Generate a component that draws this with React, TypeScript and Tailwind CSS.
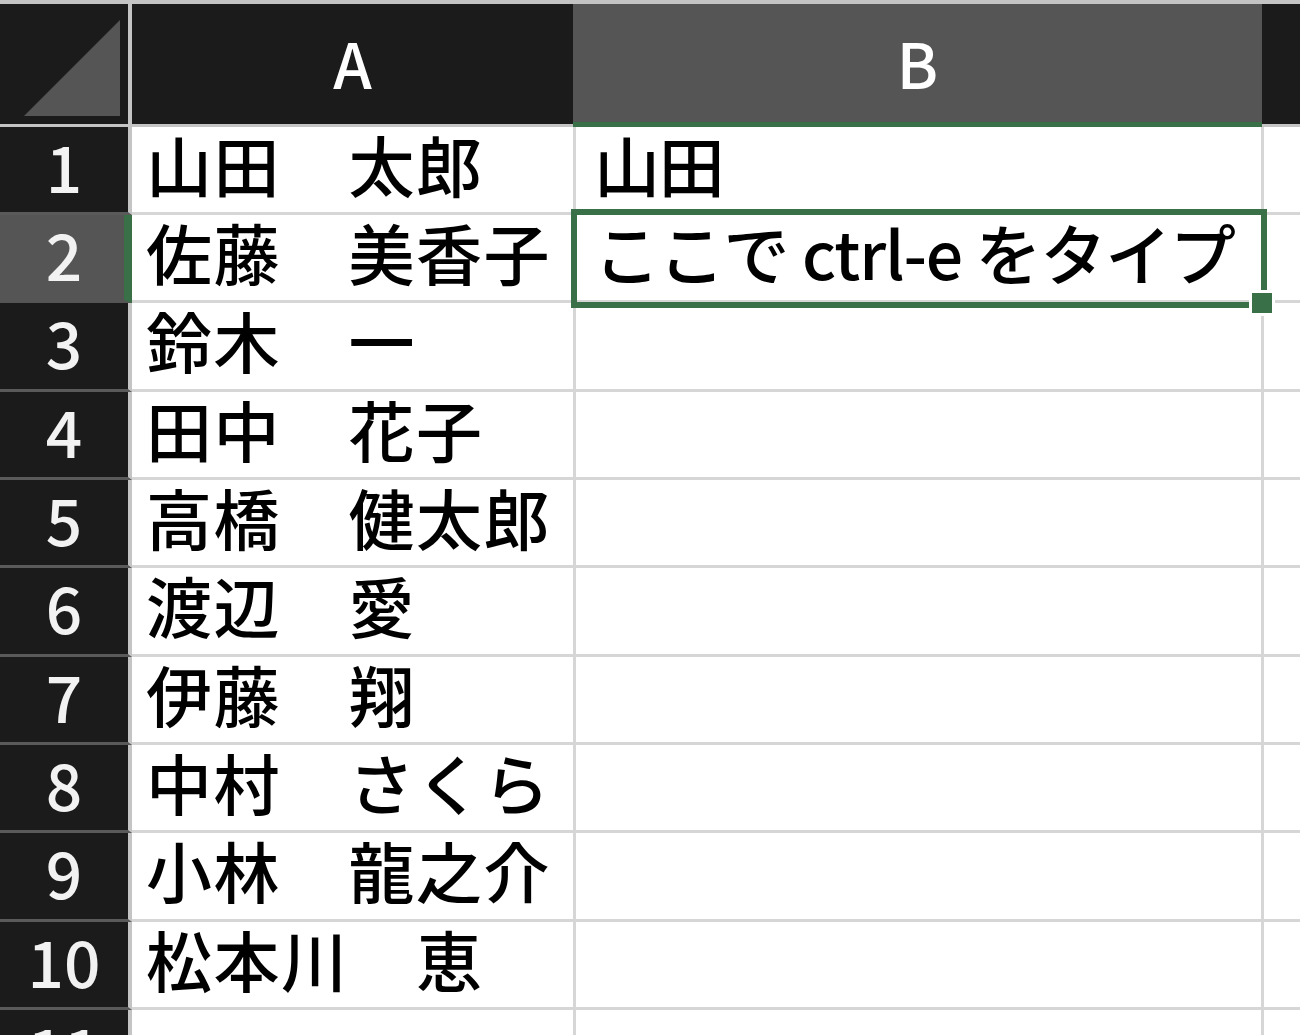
import React from "react";

const rows: [string, string][] = [
  ["山田　太郎", "山田"],
  ["佐藤　美香子", "ここで ctrl-e をタイプ"],
  ["鈴木　一", ""],
  ["田中　花子", ""],
  ["高橋　健太郎", ""],
  ["渡辺　愛", ""],
  ["伊藤　翔", ""],
  ["中村　さくら", ""],
  ["小林　龍之介", ""],
  ["松本川　恵", ""],
  ["", ""],
];

const font = { fontFamily: '"Noto Sans CJK JP", "Noto Sans", sans-serif' };

export default function App() {
  return (
    <div
      className="relative w-[1300px] h-[1035px] overflow-hidden bg-white font-medium"
      style={font}
    >
      <div className="h-[4px] bg-[#c4c4c4]" />
      {/* header row */}
      <div className="flex">
        <div className="w-[128px] h-[123px] bg-[#1b1b1b] border-b-[3px] border-[#c4c4c4] shrink-0 flex items-end justify-end pr-[8px] pb-[8px]">
          <svg width="96" height="96" viewBox="0 0 96 96">
            <polygon points="0,96 96,0 96,96" fill="#555555" />
          </svg>
        </div>
        <div className="w-[4px] h-[123px] bg-[#c4c4c4] shrink-0" />
        <div className="w-[441px] h-[123px] bg-[#1b1b1b] border-b-[3px] border-[#c4c4c4] shrink-0 flex items-center justify-center pb-[4px] text-white text-[62px] leading-none">
          A
        </div>
        <div className="w-[689px] h-[123px] bg-[#555555] border-b-[5px] border-[#3a7047] shrink-0 flex items-center justify-center pb-[2px] text-white text-[62px] leading-none">
          B
        </div>
        <div className="flex-1 h-[123px] bg-[#1b1b1b] border-b-[3px] border-[#c4c4c4]" />
      </div>
      {/* data rows */}
      {rows.map(([a, b], i) => {
        const sel = i === 1;
        const tall = i === 2 || i === 5 || i === 8;
        return (
          <div key={i} className={tall ? "flex h-[89px]" : "flex h-[88px]"}>
            {sel ? (
              <div className="w-[132px] border-r-[8px] border-[#3a7047] bg-[#555555] shrink-0 flex items-center justify-center pb-[10px] pl-[4px] text-[#f2f2f2] text-[64px] leading-none border-b-[3px] border-b-[#555555]">
                {i + 1}
              </div>
            ) : (
              <div className="w-[132px] border-r-[4px] border-r-[#c4c4c4] bg-[#1b1b1b] shrink-0 flex items-center justify-center pb-[10px] text-[#f2f2f2] text-[64px] leading-none border-b-[3px] border-b-[#5a5a5a]">
                {i + 1}
              </div>
            )}
            <div className="w-[444px] border-r-[3px] border-b-[3px] border-[#d6d6d6] shrink-0 flex items-center pl-[14px] pb-[14px] text-black text-[66px] leading-none whitespace-nowrap tracking-[1.5px]">
              {a}
            </div>
            <div className="w-[688px] border-r-[3px] border-b-[3px] border-[#d6d6d6] shrink-0 flex items-center pl-[18px] pb-[14px] text-black text-[66px] leading-none whitespace-nowrap tracking-[-1.2px]">
              {b}
            </div>
            <div className="flex-1 border-b-[3px] border-[#d6d6d6]" />
          </div>
        );
      })}
      {/* selection box */}
      <div className="absolute left-[571px] top-[209px] w-[696px] h-[99px] border-[6px] border-[#3a7047]" />
      <div className="absolute left-[1249px] top-[290px] w-[26px] h-[26px] bg-[#3a7047] border-[3px] border-white" />
    </div>
  );
}
